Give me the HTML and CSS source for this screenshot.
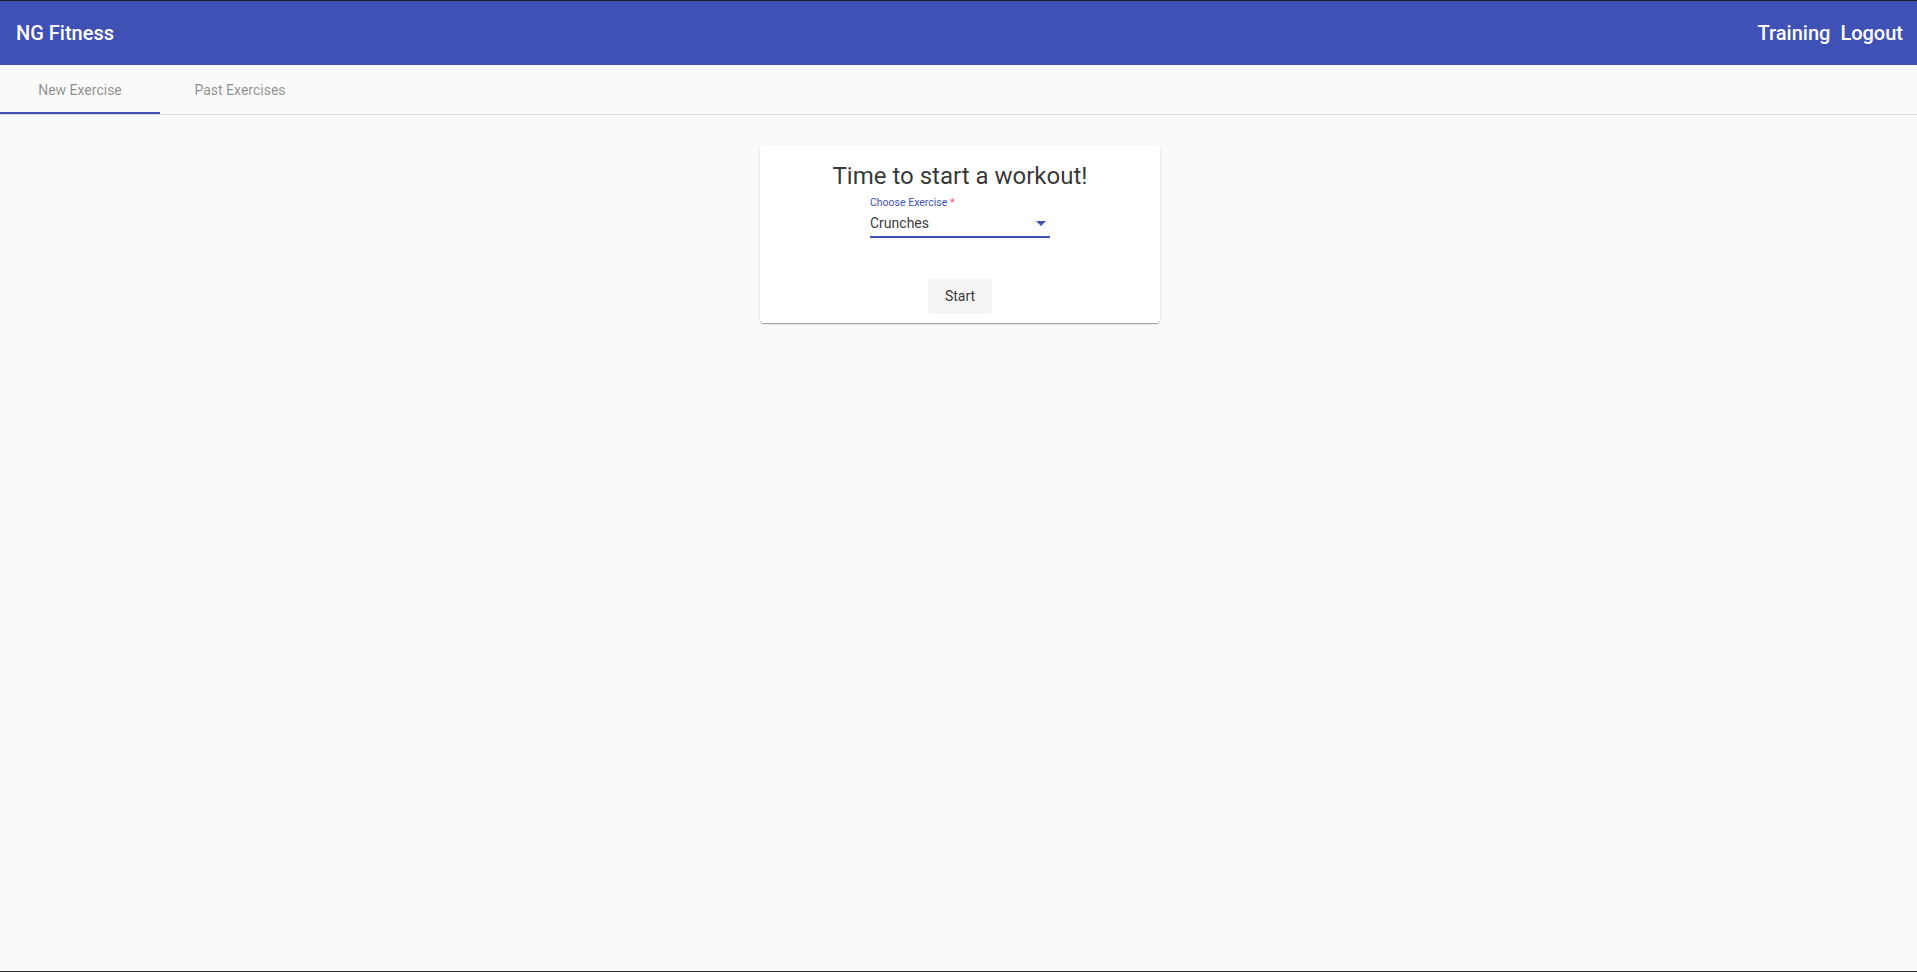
FILE: index.html
```html
<!DOCTYPE html>
<html lang="en">
<head>
<meta charset="utf-8">
<title>NG Fitness</title>
<link rel="stylesheet" href="styles.css">
</head>
<body>
<header class="toolbar">
  <span class="brand">NG Fitness</span>
  <nav class="nav">
    <a class="nav-link" href="#">Training</a>
    <a class="nav-link" href="#">Logout</a>
  </nav>
</header>
<div class="tabs">
  <div class="tab tab-active">New Exercise</div>
  <div class="tab">Past Exercises</div>
</div>
<main class="content">
  <section class="card">
    <h1 class="card-title">Time to start a workout!</h1>
    <div class="field">
      <div class="field-label">Choose Exercise<span class="req"> *</span></div>
      <div class="field-value">
        <span>Crunches</span>
        <span class="arrow"></span>
      </div>
      <div class="field-underline"></div>
    </div>
    <button class="btn" type="button">Start</button>
  </section>
</main>
<div class="screen-edge"></div>
</body>
</html>
```
FILE: styles.css
```css
html, body {
  margin: 0;
  padding: 0;
  height: 100%;
}
body {
  background: #fafafa;
  font-family: Roboto, "Liberation Sans", Arial, sans-serif;
  color: rgba(0, 0, 0, 0.87);
  display: flex;
  flex-direction: column;
  overflow: hidden;
}
.toolbar {
  box-sizing: border-box;
  height: 65px;
  border-top: 1px solid #1e1e1e;
  background: #3f51b5;
  color: #fff;
  display: flex;
  align-items: center;
  justify-content: space-between;
  padding: 0 14px 0 16px;
  flex-shrink: 0;
}
.brand {
  font-size: 20px;
  font-weight: 500;
}
.nav {
  display: flex;
  gap: 10px;
}
.nav-link {
  color: #fff;
  text-decoration: none;
  font-size: 20px;
  font-weight: 500;
}
.tabs {
  display: flex;
  height: 49px;
  border-bottom: 1px solid rgba(0, 0, 0, 0.12);
  flex-shrink: 0;
}
.tab {
  box-sizing: border-box;
  width: 160px;
  height: 49px;
  display: flex;
  align-items: center;
  justify-content: center;
  font-size: 14px;
  color: rgba(0, 0, 0, 0.45);
}
.tab-active {
  border-bottom: 2px solid #3f51b5;
  padding-top: 2px;
}
.content {
  flex: 1;
  display: flex;
  justify-content: center;
  align-items: flex-start;
  padding: 30px 0 0 3px;
}
.card {
  box-sizing: border-box;
  width: 400px;
  background: #fff;
  border-radius: 4px;
  padding: 15px 16px 9px;
  box-shadow: 0 2px 1px -1px rgba(0, 0, 0, 0.2), 0 1px 1px 0 rgba(0, 0, 0, 0.14), 0 1px 3px 0 rgba(0, 0, 0, 0.12);
  display: flex;
  flex-direction: column;
  align-items: center;
}
.card-title {
  margin: 0;
  font-size: 24px;
  line-height: 32px;
  font-weight: 400;
  color: rgba(0, 0, 0, 0.8);
}
.field {
  width: 180px;
  padding-top: 5px;
}
.field-label {
  font-size: 10.5px;
  line-height: 12px;
  color: #3f51b5;
}
.req {
  color: #ff4081;
}
.field-value {
  margin-top: 5px;
  height: 18px;
  display: flex;
  align-items: center;
  justify-content: space-between;
  font-size: 14px;
  line-height: 18px;
  color: rgba(0, 0, 0, 0.8);
}
.arrow {
  width: 0;
  height: 0;
  border-left: 5px solid transparent;
  border-right: 5px solid transparent;
  border-top: 5px solid #3f51b5;
  margin-right: 4px;
}
.field-underline {
  margin-top: 4px;
  height: 2px;
  background: #3f51b5;
}
.btn {
  margin-top: 41px;
  width: 64px;
  height: 35px;
  padding: 0 0 1px;
  border: 0;
  border-radius: 4px;
  background: #f4f4f4;
  font-family: inherit;
  font-size: 14px;
  color: rgba(0, 0, 0, 0.8);
  cursor: pointer;
}
.screen-edge {
  height: 1px;
  background: #2e2e2e;
  flex-shrink: 0;
}
```
